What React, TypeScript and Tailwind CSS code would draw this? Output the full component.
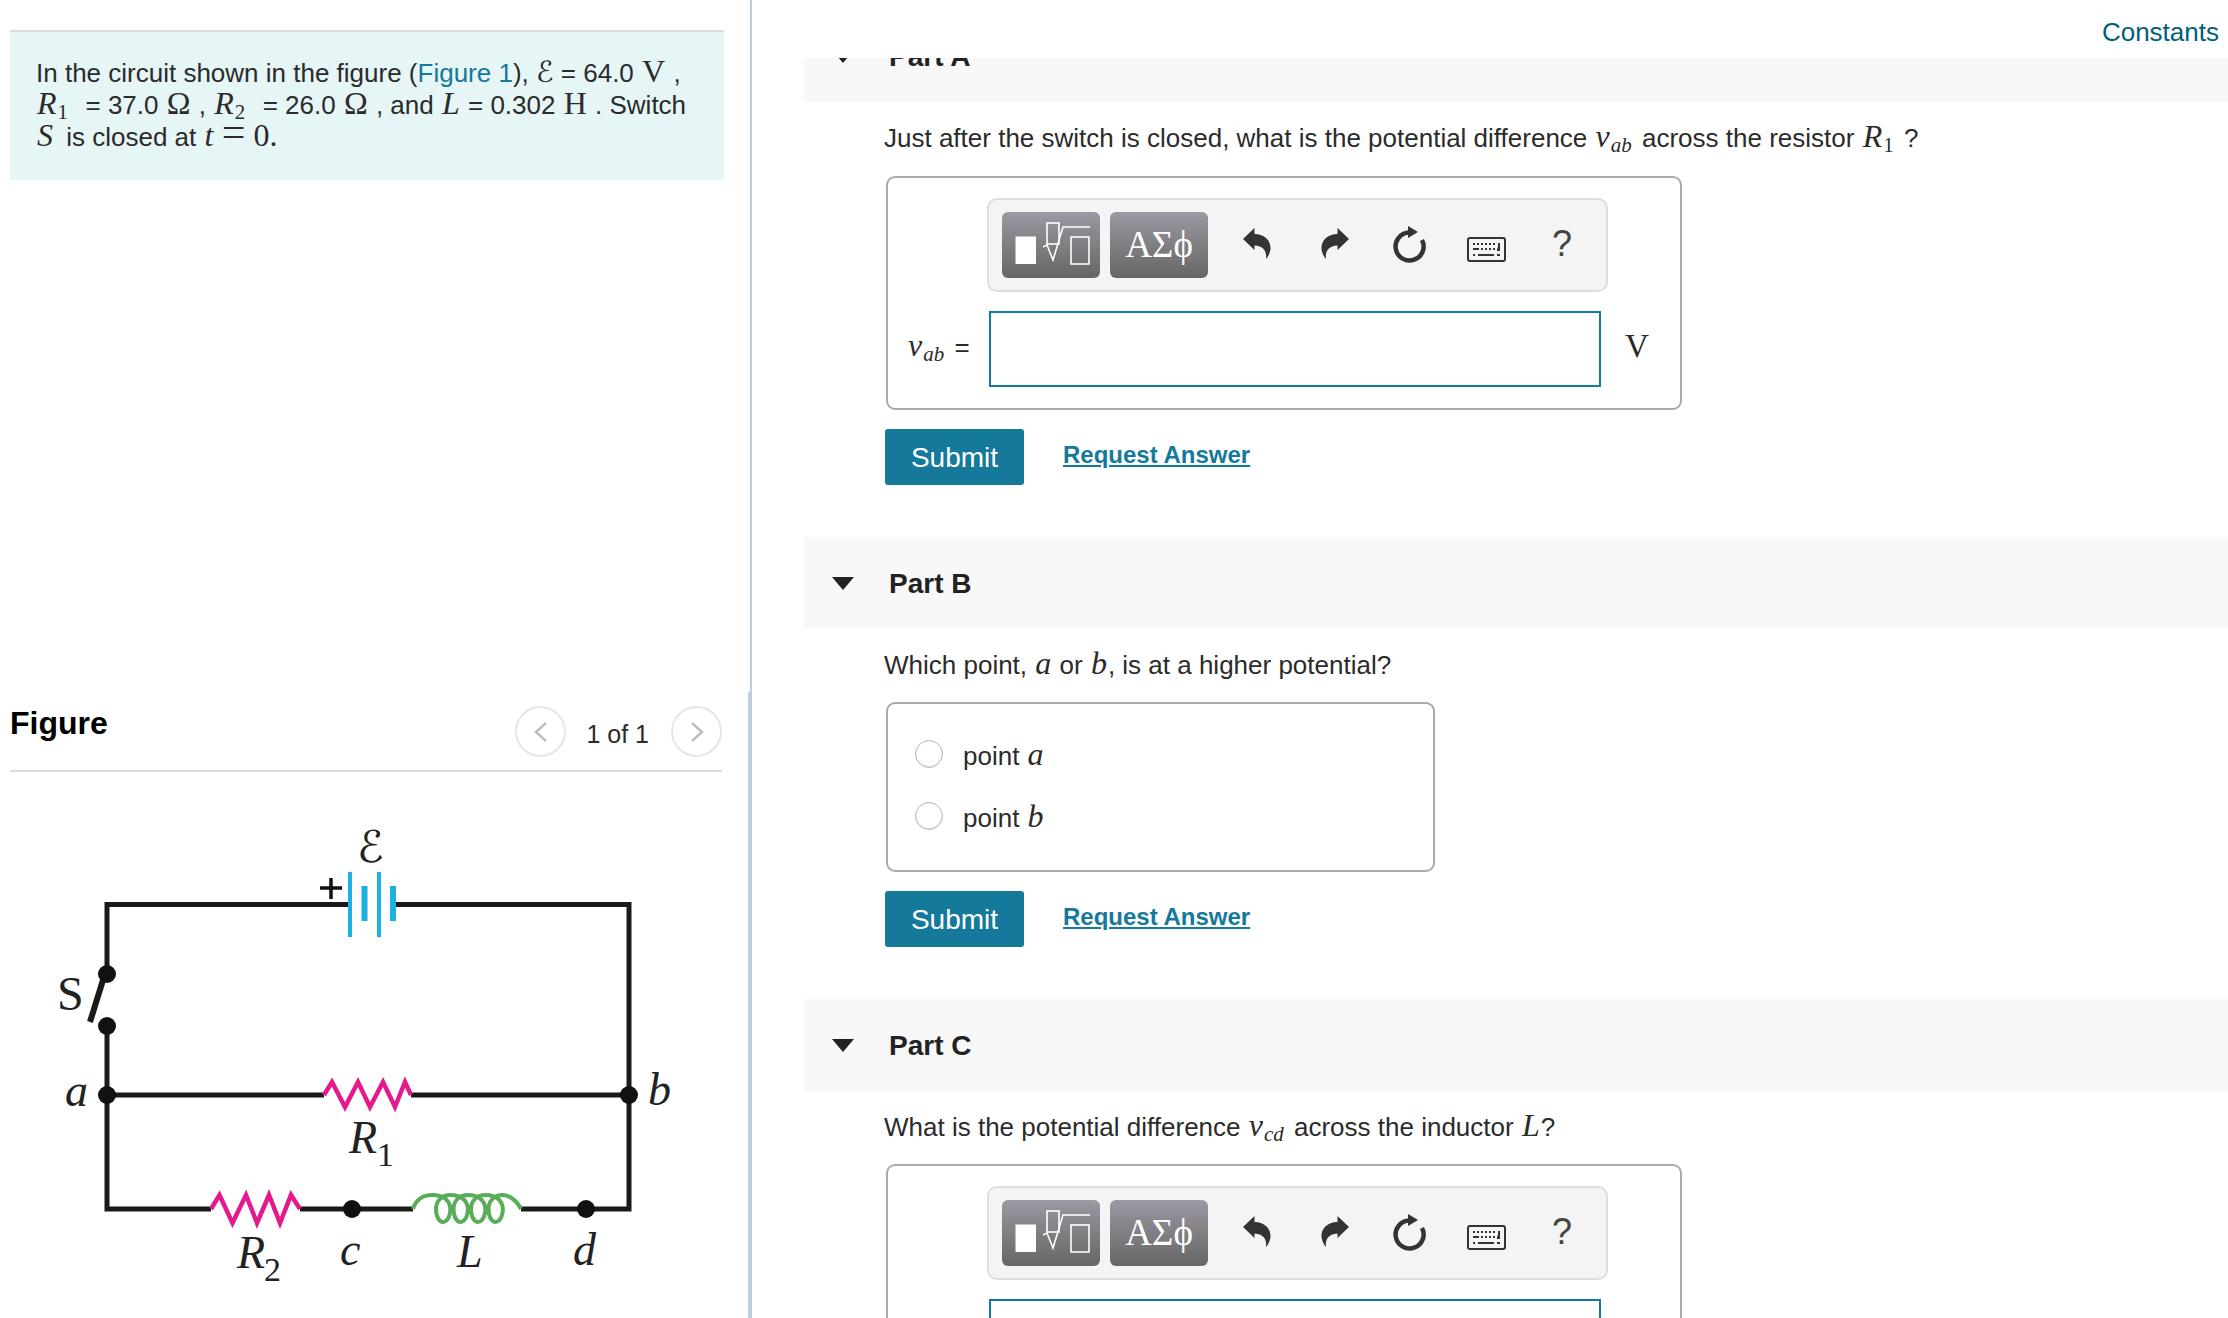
import type { ReactNode } from 'react';

const SERIF = "font-['Liberation_Serif',serif]";

function M({ children }: { children: ReactNode }) {
  return <span className="mx-px font-['Liberation_Serif',serif] text-[32px] leading-[0] italic">{children}</span>;
}

function Unit({ children }: { children: ReactNode }) {
  return <span className="mx-px font-['Liberation_Serif',serif] text-[32px] leading-[0]">{children}</span>;
}

function Sub({ children, italic }: { children: ReactNode; italic?: boolean }) {
  return (
    <sub className={`mr-[3px] font-['Liberation_Serif',serif] text-[21px] ${italic ? 'italic' : ''}`}>{children}</sub>
  );
}

function Emf() {
  return <span className="font-['DejaVu_Sans',sans-serif] text-[29px] leading-[0]">ℰ</span>;
}

function NavCircle({ dir }: { dir: 'left' | 'right' }) {
  return (
    <div className="mt-px flex h-[51px] w-[51px] items-center justify-center rounded-full border-2 border-[#e6e6e6]">
      <svg width="16" height="22" viewBox="0 0 16 22" fill="none" stroke="#bdbdbd" strokeWidth="2.4">
        <path d={dir === 'left' ? 'M13 2 L3 11 L13 20' : 'M3 2 L13 11 L3 20'} />
      </svg>
    </div>
  );
}

function Circuit() {
  const coil = [0, 1, 2, 3]
    .map((i) => {
      const x = 17.5 * i;
      return `C${444 + x} 1194 ${452 + x} 1200 ${450 + x} 1212 C${449 + x} 1219 ${445 + x} 1221 ${443 + x} 1221 C${440 + x} 1221 ${436 + x} 1217 ${436 + x} 1208 C${436 + x} 1199 ${443 + x} 1194 ${450 + x} 1194`;
    })
    .join(' ');
  return (
    <svg width="712" height="547" viewBox="10 771 712 547" className="ml-[10px] block">
      <g fill="none" stroke="#1a1a1a" strokeWidth="5">
        <path d="M350 903.5 H107 V973" />
        <path d="M393 903.5 H629 V1208 H521" />
        <path d="M107 1025 V1208 H211" />
        <path d="M107 1094 H324" />
        <path d="M411 1094 H629" />
        <path d="M300 1208 H413" />
        <path d="M103 979 L90 1021" strokeWidth="6" />
      </g>
      <g fill="#111">
        <circle cx="107" cy="973" r="9" />
        <circle cx="107" cy="1025" r="9" />
        <circle cx="107" cy="1094" r="9" />
        <circle cx="629" cy="1094" r="9" />
        <circle cx="352" cy="1208" r="9" />
        <circle cx="586" cy="1208" r="9" />
      </g>
      <g stroke="#1cb1e2" fill="none">
        <path d="M350 871 V936 M379 871 V936" strokeWidth="4" />
        <path d="M364.5 885 V920 M393 885 V920" strokeWidth="6" />
      </g>
      <path d="M320 887 H342 M331 877 V898" stroke="#111" strokeWidth="3.5" />
      <g fill="none" stroke="#e5198c" strokeWidth="4.5">
        <path d="M324 1094 L332 1081 L345 1106 L358 1081 L370 1106 L383 1081 L395 1106 L405 1081 L411 1094" />
        <path d="M211 1208 L219.5 1194 L232.5 1222 L246 1194 L257 1222 L269 1194 L280 1222 L291 1194 L300 1208" />
      </g>
      <path
        d={`M413 1208 C416 1198 424 1194 432 1194 ${coil} C${508} 1194 ${516} 1198 521 1208`}
        fill="none"
        stroke="#58ad58"
        strokeWidth="4"
      />
      <g fill="#222" fontFamily="'Liberation Serif', serif" fontSize="46" fontStyle="italic">
        <text x="65" y="1105">a</text>
        <text x="648" y="1104">b</text>
        <text x="349" y="1152">R</text>
        <text x="237" y="1267">R</text>
        <text x="340" y="1264">c</text>
        <text x="457" y="1266">L</text>
        <text x="573" y="1264">d</text>
      </g>
      <g fill="#222" fontFamily="'Liberation Serif', serif" fontSize="34">
        <text x="377" y="1165">1</text>
        <text x="264" y="1280">2</text>
      </g>
      <text x="57" y="1009" fill="#222" fontFamily="'Liberation Serif', serif" fontSize="48">S</text>
      <text x="357" y="861" fill="#222" fontFamily="'DejaVu Sans', sans-serif" fontSize="44">ℰ</text>
    </svg>
  );
}

function MathToolbar() {
  return (
    <div className="ml-[81px] flex h-[94px] w-[621px] items-center rounded-[10px] border-2 border-[#dedede] bg-[#f4f4f4] pl-[13px]">
      <div className="h-[66px] w-[98px] rounded-[6px] bg-gradient-to-b from-[#9b99a3] to-[#666666]">
        <svg width="98" height="66" viewBox="1002 212 98 66">
          <rect x="1015.5" y="236.5" width="20.5" height="27.5" fill="#fff" />
          <g fill="none" stroke="#fff" strokeWidth="1.6">
            <rect x="1047" y="223" width="12" height="21" />
            <path d="M1043 247 L1047 245 L1053 260 L1063 227 H1090" />
            <rect x="1071" y="237" width="18" height="27" />
          </g>
        </svg>
      </div>
      <div
        className={`ml-[10px] flex h-[66px] w-[98px] items-center justify-center rounded-[6px] bg-gradient-to-b from-[#9b99a3] to-[#666666] ${SERIF} text-[37px] text-white`}
      >
        ΑΣϕ
      </div>
      <div className="ml-[12px] flex h-[66px] items-start">
        <div className="mt-[15px] flex w-[76px] justify-center">
          <svg width="30" height="33" viewBox="1243 227 30 33" fill="#333">
            <path d="M1243 239 L1254.5 228 V234 C1265 234 1271 241 1270.5 249 C1270 253 1268 257 1266 259 C1267 252 1264 246 1254.5 245.5 V250 Z" />
          </svg>
        </div>
        <div className="mt-[15px] flex w-[76px] justify-center">
          <svg width="30" height="33" viewBox="1243 227 30 33" fill="#333" className="-scale-x-100">
            <path d="M1243 239 L1254.5 228 V234 C1265 234 1271 241 1270.5 249 C1270 253 1268 257 1266 259 C1267 252 1264 246 1254.5 245.5 V250 Z" />
          </svg>
        </div>
        <div className="mt-[14px] flex w-[76px] justify-center">
          <svg width="36" height="38" viewBox="0 0 36 38" fill="none">
            <path d="M17 6.5 A14 14 0 1 0 30 14" stroke="#333" strokeWidth="4.5" />
            <path d="M16 0 L26 6 L16 12 Z" fill="#333" />
          </svg>
        </div>
        <div className="mt-[25px] flex w-[76px] justify-center">
          <svg width="39" height="25" viewBox="0 0 39 25">
            <rect x="1" y="1" width="37" height="23" rx="2" fill="#f4f4f4" stroke="#333" strokeWidth="2" />
            <path
              d="M6 7 H8 M10 7 H12 M14 7 H16 M18 7 H20 M22 7 H24 M26 7 H28 M6 12 H12 M14 12 H16 M18 12 H20 M22 12 H24 M26 12 H28 M32 6 V13 H30 M6 18 H8 M11 18 H27 M30 18 H33"
              stroke="#333"
              strokeWidth="2"
            />
          </svg>
        </div>
        <div className="mt-[14px] flex w-[76px] justify-center text-[36px] leading-none text-[#444]">?</div>
      </div>
    </div>
  );
}

function AnswerBox({ label, unit }: { label?: ReactNode; unit?: string }) {
  return (
    <div className="mt-[21px] ml-[2px] w-[796px] rounded-[9px] border-2 border-[#aaaaaa] pt-[20px] pb-[21px] pl-[18px]">
      <MathToolbar />
      <div className="mt-[19px] flex">
        <div className="mt-[20px] w-[83px] pl-px text-[26px] leading-[32px]">{label}</div>
        <div className="h-[76px] w-[612px] border-2 border-[#14799a] bg-white" />
        <div className={`mt-[15px] ml-[24px] ${SERIF} text-[33px] leading-[40px]`}>{unit}</div>
      </div>
    </div>
  );
}

function SubmitRow() {
  return (
    <div className="mt-[19px] ml-px flex items-start">
      <button className="h-[56px] w-[139px] rounded-[3px] bg-[#14799a] pt-[2px] text-[28px] text-white">Submit</button>
      <a className="mt-[10px] ml-[39px] text-[24px] leading-[32px] font-bold text-[#14799a] underline">
        Request Answer
      </a>
    </div>
  );
}

function PartHeader({ title }: { title: string }) {
  return (
    <div className="flex h-[92px] items-center bg-[#f8f8f8] pl-[28px]">
      <div className="h-0 w-0 border-x-[11px] border-t-[13px] border-x-transparent border-t-[#222]" />
      <div className="mt-[2px] ml-[35px] text-[28px] font-bold text-[#222]">{title}</div>
    </div>
  );
}

function Question({ children }: { children: ReactNode }) {
  return <div className="mt-[20px] text-[26px] leading-[32px]">{children}</div>;
}

export default function App() {
  return (
    <div className="flex h-[1318px] w-[2228px] overflow-hidden bg-white font-['Liberation_Sans',Arial,sans-serif] text-[#2b2b2b]">
      <div className="w-[752px] shrink-0">
        <div className="h-[692px] border-r-2 border-[#bccde0] pt-[30px] pl-[10px]">
          <div className="h-[150px] w-[714px] border-t-2 border-[#dddddd] bg-[#e6f5f6] pt-[25px] pl-[26px] text-[26px] leading-[32px]">
            In the circuit shown in the figure (<span className="text-[#14799a]">Figure 1</span>), <Emf /> = 64.0{' '}
            <Unit>V</Unit> ,<br />
            <M>R</M>
            <Sub>1</Sub>&nbsp; = 37.0 <Unit>Ω</Unit> , <M>R</M>
            <Sub>2</Sub>&nbsp; = 26.0 <Unit>Ω</Unit> , and <M>L</M> = 0.302 <Unit>H</Unit> . Switch
            <br />
            <M>S</M> <span className="ml-[5px]">is closed at</span> <M>t</M>{' '}
            <span className={`${SERIF} text-[42px] leading-[0]`}>=</span> <Unit>0.</Unit>
          </div>
        </div>
        <div className="h-[626px] border-r-4 border-[#bccde0]">
          <div className="ml-[10px] flex h-[80px] w-[712px] items-start border-b-2 border-[#dddddd] pt-[13px]">
            <div className="text-[32px] leading-[36px] font-bold text-black">Figure</div>
            <div className="ml-auto">
              <NavCircle dir="left" />
            </div>
            <div className="mt-[13px] mr-[22px] ml-[20px] text-[25px] leading-[32px]">1 of 1</div>
            <NavCircle dir="right" />
          </div>
          <Circuit />
        </div>
      </div>

      <div className="min-w-0 flex-1 pl-[52px]">
        <div className="flex h-[58px] justify-end pt-[17px] pr-[9px] text-[26px] leading-[30px] text-[#00607c]">
          Constants
        </div>

        <div className="h-[44px] overflow-hidden">
          <div className="-mt-[48px]">
            <PartHeader title="Part A" />
          </div>
        </div>
        <div className="pl-[80px]">
          <div className="pb-px">
            <Question>
              Just after the switch is closed, what is the potential difference <M>v</M>
              <Sub italic>ab</Sub> across the resistor <M>R</M>
              <Sub>1</Sub> ?
            </Question>
          </div>
          <AnswerBox
            label={
              <>
                <M>v</M>
                <Sub italic>ab</Sub> =
              </>
            }
            unit="V"
          />
          <SubmitRow />
        </div>

        <div className="mt-[52px]">
          <PartHeader title="Part B" />
        </div>
        <div className="pl-[80px]">
          <Question>
            Which point, <M>a</M> or <M>b</M>, is at a higher potential?
          </Question>
          <div className="mt-[21px] ml-[2px] h-[170px] w-[549px] rounded-[9px] border-2 border-[#aaaaaa] pt-[36px] pl-[27px]">
            <div className="flex h-[62px] items-start">
              <div className="h-[28px] w-[28px] rounded-full border border-[#b5b5b5] bg-white shadow-[inset_0_-1px_2px_rgba(0,0,0,0.12)]" />
              <div className="ml-[20px] text-[26px] leading-[32px]">
                point <M>a</M>
              </div>
            </div>
            <div className="flex h-[62px] items-start">
              <div className="h-[28px] w-[28px] rounded-full border border-[#b5b5b5] bg-white shadow-[inset_0_-1px_2px_rgba(0,0,0,0.12)]" />
              <div className="ml-[20px] text-[26px] leading-[32px]">
                point <M>b</M>
              </div>
            </div>
          </div>
          <SubmitRow />
        </div>

        <div className="mt-[52px]">
          <PartHeader title="Part C" />
        </div>
        <div className="pl-[80px]">
          <Question>
            What is the potential difference <M>v</M>
            <Sub italic>cd</Sub> across the inductor <M>L</M>?
          </Question>
          <AnswerBox />
        </div>
      </div>
    </div>
  );
}
